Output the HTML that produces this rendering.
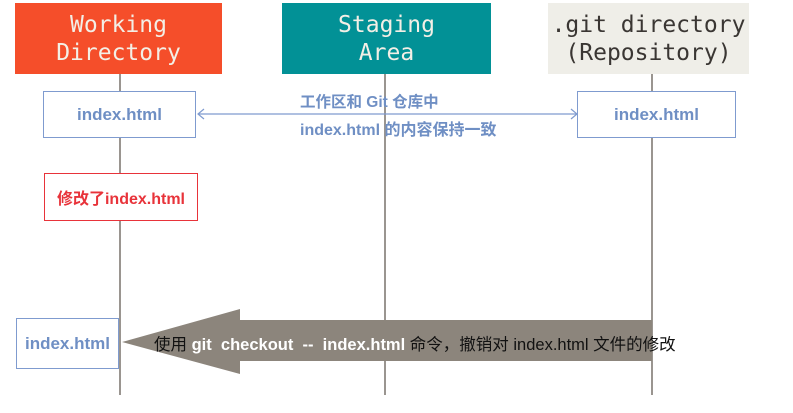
<!DOCTYPE html>
<html><head><meta charset="utf-8"><style>
body{margin:0;width:793px;height:413px;background:#fff;position:relative;overflow:hidden;font-family:"Liberation Sans","Noto Sans CJK SC",sans-serif}
.a{position:absolute}
.hd{position:absolute;top:3px;height:71px;font-family:"DejaVu Sans Mono","Liberation Mono",monospace;font-size:23px;line-height:28px;text-align:center;display:flex;align-items:center;justify-content:center}
.v{position:absolute;width:2px;background:#9a9590;top:74px;height:321px}
.bx{position:absolute;border:1px solid #7f9bcf;background:#fff;color:#6f8fc4;font-weight:bold;font-size:17px;display:flex;align-items:center;justify-content:center}
</style></head><body>
<div class="hd" style="left:15px;width:207px;background:#f54e2a;color:#f3efe6">Working<br>Directory</div>
<div class="hd" style="left:282px;width:209px;background:#029196;color:#f3efe6">Staging<br>Area</div>
<div class="hd" style="left:548px;width:201px;background:#efeee8;color:#3a3633">.git directory<br>(Repository)</div>
<div class="v" style="left:119px"></div>
<div class="v" style="left:384px"></div>
<div class="v" style="left:651px"></div>
<div class="bx" style="left:43px;top:91px;width:151px;height:45px">index.html</div>
<div class="bx" style="left:577px;top:91px;width:157px;height:45px">index.html</div>
<svg class="a" style="left:0;top:0" width="793" height="413">
<line x1="198" y1="114" x2="577" y2="114" stroke="#7f9bcf" stroke-width="1.2"/>
<polyline points="204,109 198,114 204,119" fill="none" stroke="#7f9bcf" stroke-width="1.2"/>
<polyline points="571,109 577,114 571,119" fill="none" stroke="#7f9bcf" stroke-width="1.2"/>
<polygon points="122,342 240,309 240,320 652,320 652,361 240,361 240,374" fill="#8c857c"/>
</svg>
<div class="a" style="left:300px;top:90px;color:#6f8fc4;font-weight:bold;font-size:15.5px;white-space:nowrap">工作区和 Git 仓库中</div>
<div class="a" style="left:300px;top:116px;color:#6f8fc4;font-weight:bold;font-size:16px;white-space:nowrap">index.html 的内容保持一致</div>
<div class="bx" style="left:44px;top:173px;width:152px;height:46px;border-color:#e8333a;color:#e8333a;font-size:16px">修改了index.html</div>
<div class="bx" style="left:16px;top:318px;width:101px;height:49px">index.html</div>
<div class="a" style="left:154px;top:331px;font-size:16.5px;color:#111;white-space:nowrap">使用 <b style="color:#fff">git&nbsp; checkout&nbsp; --&nbsp; index.html</b> 命令，撤销对 index.html 文件的修改</div>
</body></html>
